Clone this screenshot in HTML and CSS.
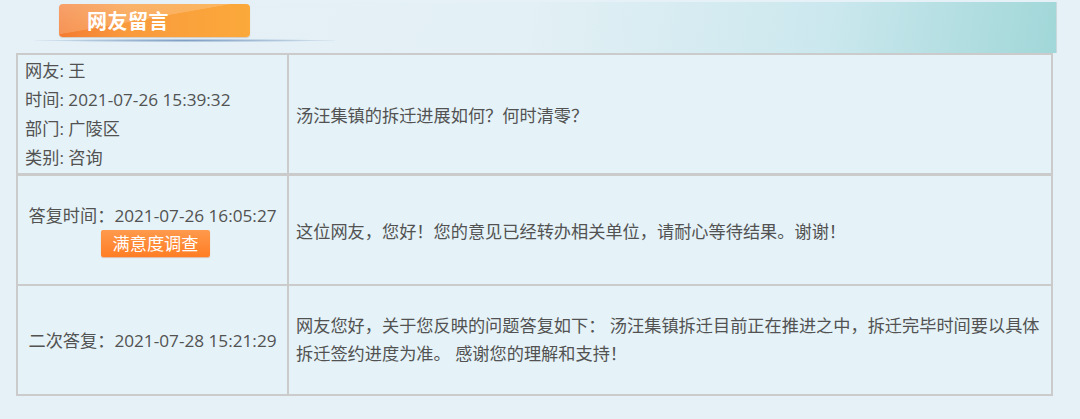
FILE: index.html
```html
<!DOCTYPE html>
<html lang="zh-CN">
<head>
	<meta charset="UTF-8">
	<title>网友留言</title>
	<link rel="stylesheet" href="styles.css">
</head>
<body>
	<div class="page">
		<div class="head">
			<span class="tab">网友留言</span>
			<div class="tab-line"></div>
		</div>
		<table class="msg">
			<tr class="ask">
				<td class="info">
					<p>网友: 王</p>
					<p>时间: 2021-07-26 15:39:32</p>
					<p>部门: 广陵区</p>
					<p>类别: 咨询</p>
				</td>
				<td class="text">汤汪集镇的拆迁进展如何？何时清零？</td>
			</tr>
			<tr class="reply">
				<td class="info center">
					<p>答复时间：2021-07-26 16:05:27</p>
					<a class="btn" href="#">满意度调查</a>
				</td>
				<td class="text">这位网友，您好！您的意见已经转办相关单位，请耐心等待结果。谢谢！</td>
			</tr>
			<tr class="reply2">
				<td class="info center">
					<p>二次答复：2021-07-28 15:21:29</p>
				</td>
				<td class="text multi">网友您好，关于您反映的问题答复如下： 汤汪集镇拆迁目前正在推进之中，拆迁完毕时间要以具体拆迁签约进度为准。 感谢您的理解和支持！</td>
			</tr>
		</table>
	</div>
</body>
</html>
```
FILE: styles.css
```css
*{padding: 0;margin: 0;}
body{
	background-color: #e6f1f7;
	font-family: "Open Sans", "Noto Sans CJK SC", sans-serif;
	font-size: 17.2px;
	color: #525252;
}
.page{
	width: 1080px;
	height: 419px;
	padding-top: 2px;
}

/* 标题栏 */
.head{
	width: 1057px;
	height: 51px;
	background: linear-gradient(100deg, #e6f1f7 0%, #e3f0f5 50%, #cbe8ee 78%, #a1d7d8 100%);
	border-right: 1px solid #c9d9dc;
	box-sizing: border-box;
	display: flex;
	flex-direction: column;
}
.tab{
	display: block;
	width: 191px;
	height: 33px;
	margin: 2px 0 0 59px;
	padding-left: 28px;
	box-sizing: border-box;
	border-radius: 4px;
	background:
		linear-gradient(170deg, rgba(255,255,255,0.28) 0%, rgba(255,255,255,0.18) 45%, rgba(255,255,255,0) 46%),
		linear-gradient(90deg, #f47b30 0%, #f99a3d 35%, #fba93a 100%);
	color: #fff;
	font-family: "Noto Sans CJK SC", sans-serif;
	font-weight: bold;
	font-size: 20px;
	line-height: 33px;
	letter-spacing: 0.5px;
	box-shadow: 0 1px 1px rgba(160,90,30,0.25);
}
.tab-line{
	width: 300px;
	height: 3px;
	margin: 2px 0 0 35px;
	background: radial-gradient(ellipse at center, #7f9fc4 0%, rgba(127,159,196,0.5) 45%, rgba(127,159,196,0) 75%);
}

/* 留言表格 */
.msg{
	width: 1037px;
	margin-left: 16px;
	border-collapse: separate;
	border-spacing: 0;
	border: 1px solid #cbcbcb;
	background-color: #e5f2f8;
}
.msg td{
	border: 1px solid #cbcbcb;
	vertical-align: middle;
}
.msg .info{
	width: 262px;
	padding-left: 7px;
	line-height: 29px;
}
.msg .center{
	text-align: center;
	padding-left: 0;
}
.msg .text{
	padding-left: 7px;
	padding-right: 6px;
}
.msg .multi{
	line-height: 28px;
}
.msg .ask td{
	height: 118px;
	border-bottom-width: 2px;
}
.msg .reply td{
	height: 108px;
}
.msg .reply2 td{
	height: 108px;
}
.msg .reply p{
	line-height: 26px;
}
.btn{
	display: inline-block;
	width: 109px;
	height: 27px;
	line-height: 27px;
	margin-left: 6px;
	text-align: center;
	color: #fff;
	text-decoration: none;
	border-radius: 2px;
	background: linear-gradient(#ff9a4c, #ff7d25);
	box-shadow: 0 1px 1px rgba(200,90,20,0.35);
}
```
